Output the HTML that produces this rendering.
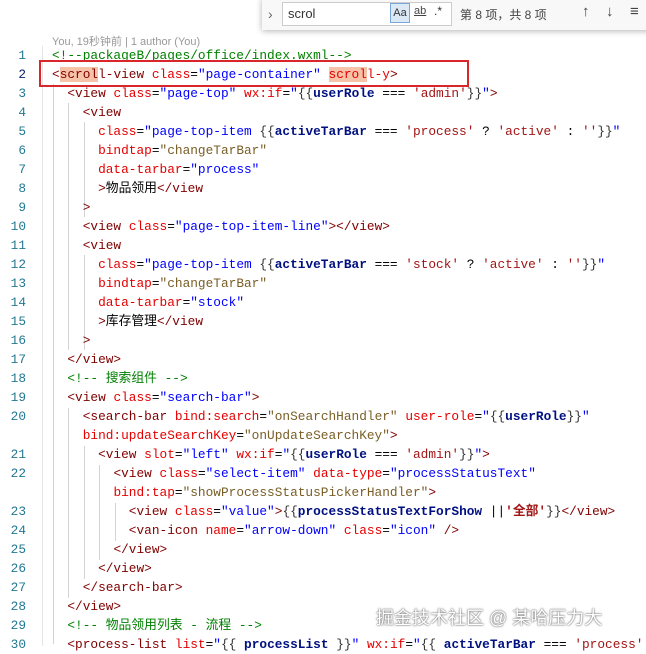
<!DOCTYPE html>
<html><head><meta charset="utf-8"><style>
body{margin:0;width:646px;height:645px;overflow:hidden;background:#fff;position:relative;font-family:"Liberation Mono","Noto Sans CJK SC",monospace;}
#code{position:absolute;top:46px;left:0;width:646px;}
.r{height:19px;line-height:19px;font-size:12.8px;white-space:pre;position:relative;}
.n{position:absolute;left:0;width:26px;text-align:right;color:#237893;font-size:12.8px}
.n.cur{color:#0b216f}
.c0{position:absolute;left:52px;color:#000}
.t{color:#800000}.a{color:#e50000}.s{color:#0000ff}.h{color:#795e26}.v{color:#001080;font-weight:bold}.q{color:#a31515}.cm{color:#008000}.p{color:#000}.g{color:#333}
.hl{background:#f7c3a8}
.guide{position:absolute;width:1px;background:#d3d3d3}
#find{position:absolute;left:262px;top:-2px;width:400px;height:32px;background:#f8f8f8;box-shadow:0 1px 6px rgba(0,0,0,.3);font-family:"Liberation Sans","Noto Sans CJK SC",sans-serif;}
</style></head><body>
<div class="guide" style="left:42px;top:46px;height:600px;background:#e5e5e5"></div>
<div class="guide" style="left:53px;top:84px;height:560px"></div>
<div class="guide" style="left:68px;top:103px;height:247px"></div>
<div class="guide" style="left:68px;top:408px;height:190px"></div>
<div class="guide" style="left:84px;top:122px;height:95px"></div>
<div class="guide" style="left:84px;top:255px;height:95px"></div>
<div class="guide" style="left:84px;top:446px;height:133px"></div>
<div class="guide" style="left:99px;top:465px;height:95px"></div>
<div class="guide" style="left:115px;top:503px;height:38px"></div>
<div style="position:absolute;left:52px;top:33px;font-family:'Liberation Sans','Noto Sans CJK SC',sans-serif;font-size:11px;color:#999">You, 19秒钟前 | 1 author (You)</div>
<div id="code">
<div class="r"><span class="n">1</span><span class="c0 cm">&lt;!--packageB/pages/office/index.wxml--&gt;</span></div>
<div class="r"><span class="n cur">2</span><span class="c0"><span class="t">&lt;<span class="hl">scrol</span>l-view</span> <span class="a">class</span>=<span class="s">"page-container"</span> <span class="a"><span class="hl">scrol</span>l-y</span><span class="t">&gt;</span></span></div>
<div class="r"><span class="n">3</span><span class="c0">  <span class="t">&lt;view</span> <span class="a">class</span>=<span class="s">"page-top"</span> <span class="a">wx:if</span>=<span class="s">"</span><span class="g">{{</span><span class="v">userRole</span> === <span class="q">'admin'</span><span class="g">}}</span><span class="s">"</span><span class="t">&gt;</span></span></div>
<div class="r"><span class="n">4</span><span class="c0">    <span class="t">&lt;view</span></span></div>
<div class="r"><span class="n">5</span><span class="c0">      <span class="a">class</span>=<span class="s">"page-top-item </span><span class="g">{{</span><span class="v">activeTarBar</span> === <span class="q">'process'</span> ? <span class="q">'active'</span> : <span class="q">''</span><span class="g">}}</span><span class="s">"</span></span></div>
<div class="r"><span class="n">6</span><span class="c0">      <span class="a">bindtap</span>=<span class="h">"changeTarBar"</span></span></div>
<div class="r"><span class="n">7</span><span class="c0">      <span class="a">data-tarbar</span>=<span class="s">"process"</span></span></div>
<div class="r"><span class="n">8</span><span class="c0">      <span class="t">&gt;</span>物品领用<span class="t">&lt;/view</span></span></div>
<div class="r"><span class="n">9</span><span class="c0">    <span class="t">&gt;</span></span></div>
<div class="r"><span class="n">10</span><span class="c0">    <span class="t">&lt;view</span> <span class="a">class</span>=<span class="s">"page-top-item-line"</span><span class="t">&gt;&lt;/view&gt;</span></span></div>
<div class="r"><span class="n">11</span><span class="c0">    <span class="t">&lt;view</span></span></div>
<div class="r"><span class="n">12</span><span class="c0">      <span class="a">class</span>=<span class="s">"page-top-item </span><span class="g">{{</span><span class="v">activeTarBar</span> === <span class="q">'stock'</span> ? <span class="q">'active'</span> : <span class="q">''</span><span class="g">}}</span><span class="s">"</span></span></div>
<div class="r"><span class="n">13</span><span class="c0">      <span class="a">bindtap</span>=<span class="h">"changeTarBar"</span></span></div>
<div class="r"><span class="n">14</span><span class="c0">      <span class="a">data-tarbar</span>=<span class="s">"stock"</span></span></div>
<div class="r"><span class="n">15</span><span class="c0">      <span class="t">&gt;</span>库存管理<span class="t">&lt;/view</span></span></div>
<div class="r"><span class="n">16</span><span class="c0">    <span class="t">&gt;</span></span></div>
<div class="r"><span class="n">17</span><span class="c0">  <span class="t">&lt;/view&gt;</span></span></div>
<div class="r"><span class="n">18</span><span class="c0">  <span class="cm">&lt;!-- 搜索组件 --&gt;</span></span></div>
<div class="r"><span class="n">19</span><span class="c0">  <span class="t">&lt;view</span> <span class="a">class</span>=<span class="s">"search-bar"</span><span class="t">&gt;</span></span></div>
<div class="r"><span class="n">20</span><span class="c0">    <span class="t">&lt;search-bar</span> <span class="a">bind:search</span>=<span class="h">"onSearchHandler"</span> <span class="a">user-role</span>=<span class="s">"</span><span class="g">{{</span><span class="v">userRole</span><span class="g">}}</span><span class="s">"</span></span></div>
<div class="r"><span class="c0">    <span class="a">bind:updateSearchKey</span>=<span class="h">"onUpdateSearchKey"</span><span class="t">&gt;</span></span></div>
<div class="r"><span class="n">21</span><span class="c0">      <span class="t">&lt;view</span> <span class="a">slot</span>=<span class="s">"left"</span> <span class="a">wx:if</span>=<span class="s">"</span><span class="g">{{</span><span class="v">userRole</span> === <span class="q">'admin'</span><span class="g">}}</span><span class="s">"</span><span class="t">&gt;</span></span></div>
<div class="r"><span class="n">22</span><span class="c0">        <span class="t">&lt;view</span> <span class="a">class</span>=<span class="s">"select-item"</span> <span class="a">data-type</span>=<span class="s">"processStatusText"</span></span></div>
<div class="r"><span class="c0">        <span class="a">bind:tap</span>=<span class="h">"showProcessStatusPickerHandler"</span><span class="t">&gt;</span></span></div>
<div class="r"><span class="n">23</span><span class="c0">          <span class="t">&lt;view</span> <span class="a">class</span>=<span class="s">"value"</span><span class="t">&gt;</span><span class="g">{{</span><span class="v">processStatusTextForShow</span> ||<span class="q" style="font-weight:bold">'全部'</span><span class="g">}}</span><span class="t">&lt;/view&gt;</span></span></div>
<div class="r"><span class="n">24</span><span class="c0">          <span class="t">&lt;van-icon</span> <span class="a">name</span>=<span class="s">"arrow-down"</span> <span class="a">class</span>=<span class="s">"icon"</span> <span class="t">/&gt;</span></span></div>
<div class="r"><span class="n">25</span><span class="c0">        <span class="t">&lt;/view&gt;</span></span></div>
<div class="r"><span class="n">26</span><span class="c0">      <span class="t">&lt;/view&gt;</span></span></div>
<div class="r"><span class="n">27</span><span class="c0">    <span class="t">&lt;/search-bar&gt;</span></span></div>
<div class="r"><span class="n">28</span><span class="c0">  <span class="t">&lt;/view&gt;</span></span></div>
<div class="r"><span class="n">29</span><span class="c0">  <span class="cm">&lt;!-- 物品领用列表 - 流程 --&gt;</span></span></div>
<div class="r"><span class="n">30</span><span class="c0">  <span class="t">&lt;process-list</span> <span class="a">list</span>=<span class="s">"</span><span class="g">{{ </span><span class="v">processList</span><span class="g"> }}</span><span class="s">"</span> <span class="a">wx:if</span>=<span class="s">"</span><span class="g">{{ </span><span class="v">activeTarBar</span> === <span class="q">'process'</span></span></div>
</div>
<div style="position:absolute;left:39px;top:60px;width:430px;height:27px;border:2px solid #d9262a;box-sizing:border-box"></div>
<div id="find">
 <div style="position:absolute;left:6px;top:8px;color:#666;font-size:14px">›</div>
 <div style="position:absolute;left:20px;top:4px;width:170px;height:24px;background:#fff;border:1px solid #ccc;box-sizing:border-box"></div>
 <div style="position:absolute;left:26px;top:8px;font-size:13px;color:#333">scrol</div>
 <div style="position:absolute;left:128px;top:5px;width:20px;height:20px;background:#dbe9f7;border:1px solid #7aa7d8;box-sizing:border-box;font-size:11px;line-height:18px;text-align:center;color:#333">Aa</div>
 <div style="position:absolute;left:152px;top:7px;font-size:11px;color:#444;text-decoration:underline">ab</div>
 <div style="position:absolute;left:172px;top:6px;font-size:12px;color:#333">.*</div>
 <div style="position:absolute;left:198px;top:8px;font-size:12px;color:#444">第 8 项，共 8 项</div>
 <div style="position:absolute;left:320px;top:5px;font-size:15px;color:#444">↑</div>
 <div style="position:absolute;left:344px;top:5px;font-size:15px;color:#444">↓</div>
 <div style="position:absolute;left:368px;top:5px;font-size:15px;color:#444">≡</div>
</div>
<div style="position:absolute;left:376px;top:604px;font-family:'Liberation Sans','Noto Sans CJK SC',sans-serif;font-size:18px;color:#fff;text-shadow:0 0 2px #666,0 0 1px #666">掘金技术社区 @ 某哈压力大</div>
</body></html>
